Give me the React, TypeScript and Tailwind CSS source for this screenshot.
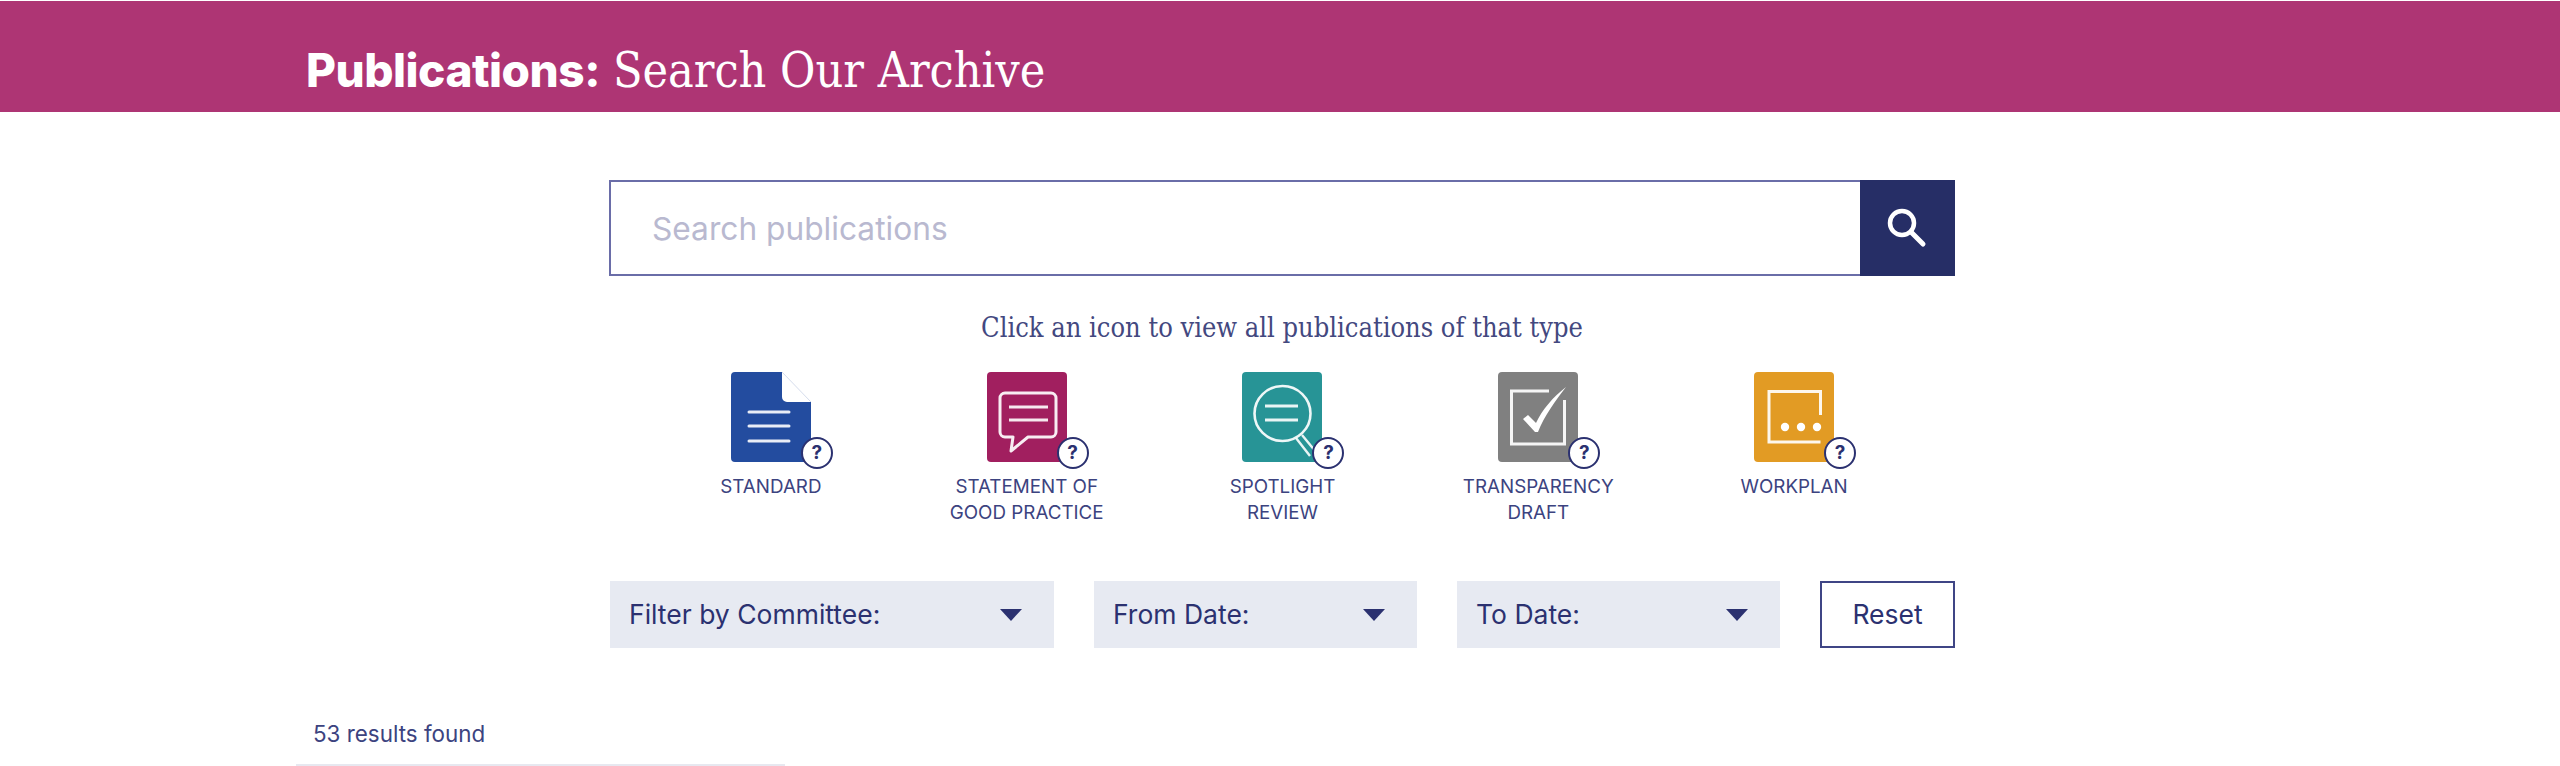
import React from "react";

const NAVY = "#2b3170";

const DocIcon = () => (
    <svg width="80" height="90" viewBox="0 0 80 90" fill="none">
        <path d="M4 0H51V25a5 5 0 0 0 5 5H80V86a4 4 0 0 1-4 4H4a4 4 0 0 1-4-4V4a4 4 0 0 1 4-4Z" fill="#234c9f" />
        <path d="M51 0L80 30" stroke="#d5dcec" strokeWidth="1" />
        <path d="M18 40H58M18 54H58M18 69H58" stroke="#fff" strokeWidth="3" strokeLinecap="round" opacity="0.9" />
    </svg>
);

const ChatIcon = () => (
    <svg width="80" height="90" viewBox="0 0 80 90" fill="none">
        <rect width="80" height="90" rx="4" fill="#a11f5f" />
        <path d="M18 21H64a5 5 0 0 1 5 5V60a5 5 0 0 1-5 5H41L24 79L26 65H18a5 5 0 0 1-5-5V26a5 5 0 0 1 5-5Z" stroke="#fff" strokeWidth="3" strokeLinejoin="round" opacity="0.92" />
        <path d="M22 35H61M22 48H61" stroke="#fff" strokeWidth="3" opacity="0.9" />
    </svg>
);

const SpotlightIcon = () => (
    <svg width="80" height="90" viewBox="0 0 80 90" fill="none">
        <rect width="80" height="90" rx="4" fill="#279496" />
        <ellipse cx="40.5" cy="41.5" rx="28" ry="27.5" stroke="#fff" strokeWidth="2.6" opacity="0.92" />
        <path d="M23 34H56M23 48H56" stroke="#fff" strokeWidth="3" opacity="0.9" />
        <path d="M54 66L68 84M60 63L74 80" stroke="#fff" strokeWidth="2.4" opacity="0.9" />
    </svg>
);

const CheckIcon = () => (
    <svg width="80" height="90" viewBox="0 0 80 90" fill="none">
        <rect width="80" height="90" rx="4" fill="#808080" />
        <path d="M51 19H13.5V72H66.5V28" stroke="#fff" strokeWidth="3" opacity="0.92" />
        <path d="M25 47L30 43L38 51C44 38 55 25 68 15C58 28 46 44 40 60H37Z" fill="#fff" />
    </svg>
);

const PlanIcon = () => (
    <svg width="80" height="90" viewBox="0 0 80 90" fill="none">
        <rect width="80" height="90" rx="4" fill="#e29b24" />
        <path d="M66.5 43V19.5H15V70H66.5" stroke="#fff" strokeWidth="3" opacity="0.92" />
        <circle cx="31" cy="55" r="4.2" fill="#fff" />
        <circle cx="47" cy="55" r="4.2" fill="#fff" />
        <circle cx="63" cy="55" r="4.2" fill="#fff" />
    </svg>
);

const types = [
    { icon: <DocIcon />, lines: ["STANDARD"] },
    { icon: <ChatIcon />, lines: ["STATEMENT OF", "GOOD PRACTICE"] },
    { icon: <SpotlightIcon />, lines: ["SPOTLIGHT", "REVIEW"] },
    { icon: <CheckIcon />, lines: ["TRANSPARENCY", "DRAFT"] },
    { icon: <PlanIcon />, lines: ["WORKPLAN"] },
];

const Filter = ({ label, width }: { label: string; width: string }) => (
    <div className={`flex h-[67px] items-center justify-between bg-[#e7eaf2] pl-[19px] pr-[32px] text-[26.5px] text-[#2b3170] ${width}`}>
        <span>{label}</span>
        <svg width="22" height="12" viewBox="0 0 22 12">
            <path d="M0 0H22L11 12Z" fill={NAVY} />
        </svg>
    </div>
);

export default function App() {
    return (
        <div className="h-[766px] overflow-hidden bg-white font-['Inter',sans-serif]">
            {/* Header */}
            <header className="mt-px flex h-[111px] items-end bg-[#ae3574] pb-[12px] pl-[306px] text-white">
                <h1 className="flex items-baseline gap-[13px] leading-[60px]">
                    <span className="text-[46px] font-extrabold tracking-[-0.5px]">Publications:</span>
                    <span className="font-['DejaVu_Serif_Condensed','DejaVu_Serif',serif] text-[48px]">Search Our Archive</span>
                </h1>
            </header>

            <main className="ml-[609px] w-[1346px] pt-[68px]">
                {/* Search */}
                <div className="flex h-[96px] border-2 border-[#6a6da8]">
                    <div className="flex flex-1 items-center pl-[41px] pt-[2px] text-[31.7px] text-[#b9b9d0]">Search publications</div>
                    <button className="-my-[2px] -mr-[2px] flex w-[95px] items-center justify-center bg-[#262e66] pr-[2px]">
                        <svg width="42" height="42" viewBox="0 0 42 42" fill="none">
                            <circle cx="16" cy="16" r="12" stroke="#fff" strokeWidth="4.5" />
                            <path d="M25 25L37 37" stroke="#fff" strokeWidth="5" strokeLinecap="round" />
                        </svg>
                    </button>
                </div>

                <p className="mt-[34px] text-center font-['DejaVu_Serif_Condensed','DejaVu_Serif',serif] text-[27px] leading-[36px] text-[#43487f]">
                    Click an icon to view all publications of that type
                </p>

                {/* Publication types */}
                <div className="ml-[34px] mt-[26px] grid w-[1279px] grid-cols-5">
                    {types.map((t) => (
                        <div key={t.lines[0]} className="flex flex-col items-center">
                            <div className="relative h-[90px] w-[80px]">
                                {t.icon}
                                <span className="absolute left-[70px] top-[65px] flex h-[32px] w-[32px] items-center justify-center rounded-full border-2 border-[#2b3170] bg-white text-[19px] font-bold text-[#2b3170]">
                                    ?
                                </span>
                            </div>
                            <div className="mt-[12px] h-[52px] text-center text-[18.8px] leading-[26px] text-[#3c4380]">
                                {t.lines.map((l) => (
                                    <div key={l}>{l}</div>
                                ))}
                            </div>
                        </div>
                    ))}
                </div>

                {/* Filters */}
                <div className="mt-[55px] flex gap-[40px] pl-px">
                    <Filter label="Filter by Committee:" width="w-[444px]" />
                    <Filter label="From Date:" width="w-[323px]" />
                    <Filter label="To Date:" width="w-[323px]" />
                    <button className="h-[67px] flex-1 border-2 border-[#3f4585] text-[26.5px] text-[#2b3170]">Reset</button>
                </div>
            </main>

            {/* Results */}
            <div className="ml-[296px] mt-[72px] w-[489px] border-b-2 border-[#e7e8f0] pb-[16px] pl-[17px] text-[22.4px] leading-[28px] text-[#3c4380]">
                53 results found
            </div>
        </div>
    );
}
